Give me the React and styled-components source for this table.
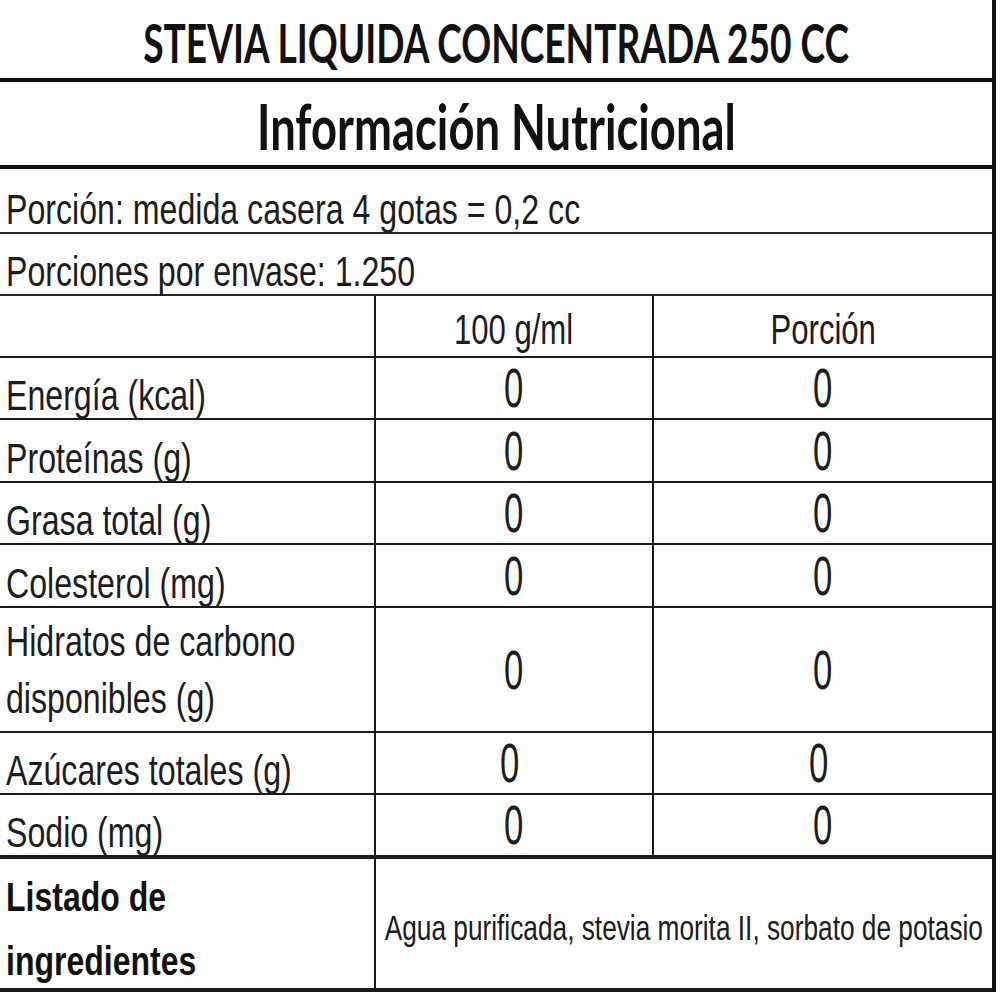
import React from "react";
import styled, { createGlobalStyle } from "styled-components";

const Global = createGlobalStyle`
  html, body { margin: 0; padding: 0; background: #ffffff; }
  body { font-family: "Liberation Sans", Arial, sans-serif; color: #1c1c1c; }
  * { box-sizing: border-box; }
`;

const Sheet = styled.div`
  width: 996px;
  display: flex;
  flex-direction: column;
  border-right: 4px solid #111;
  background: #fff;
`;

const BannerRow = styled.div`
  height: ${(p) => p.$h}px;
  border-bottom: 4px solid #111;
  display: flex;
  align-items: center;
  justify-content: center;
  padding-top: ${(p) => p.$pt || 0}px;
`;

const BannerText = styled.span`
  display: inline-block;
  font-family: Lato, "Open Sans", sans-serif;
  font-weight: 700;
  font-size: ${(p) => p.$size}px;
  line-height: 1;
  white-space: nowrap;
  color: #111;
  transform: scaleX(${(p) => p.$sx});
  transform-origin: center;
`;

const InfoRow = styled.div`
  height: ${(p) => p.$h}px;
  border-bottom: 2px solid #222;
  display: flex;
  align-items: flex-end;
  padding-left: 6px;
`;

const Label = styled.span`
  display: inline-block;
  font-size: 42px;
  line-height: ${(p) => p.$lh || 44}px;
  white-space: nowrap;
  color: #1c1c1c;
  transform: scaleX(0.765);
  transform-origin: left center;
`;

const Grid = styled.div`
  display: grid;
  grid-template-columns: 376px 278px 1fr;
`;

const Cell = styled.div`
  height: ${(p) => p.$h}px;
  border-bottom: ${(p) => (p.$thick ? 4 : 2)}px solid #1a1a1a;
  border-right: ${(p) => (p.$last ? "none" : "2px solid #1a1a1a")};
  grid-column: ${(p) => p.$span || "auto"};
  display: flex;
  align-items: ${(p) => p.$align || "flex-end"};
  justify-content: ${(p) => (p.$center ? "center" : "flex-start")};
  padding-left: ${(p) => (p.$center ? 0 : 6)}px;
  padding-right: ${(p) => p.$nudge || 0}px;
  padding-bottom: ${(p) => p.$pb || 0}px;
  padding-top: ${(p) => p.$pt || 0}px;
`;

const HeadText = styled.span`
  display: inline-block;
  font-size: 42px;
  line-height: 44px;
  white-space: nowrap;
  color: #1c1c1c;
  transform: scaleX(0.74);
  transform-origin: center;
`;

const Zero = styled.span`
  display: inline-block;
  font-size: 56px;
  line-height: 58px;
  color: #1c1c1c;
  transform: scaleX(0.62);
  transform-origin: center;
`;

const BoldLabel = styled.span`
  display: inline-block;
  font-size: 40px;
  font-weight: 700;
  line-height: 64px;
  white-space: nowrap;
  color: #111;
  transform: scaleX(0.8);
  transform-origin: left center;
`;

const Ingredients = styled.span`
  display: inline-block;
  font-size: 35px;
  line-height: 40px;
  white-space: nowrap;
  color: #1c1c1c;
  transform: scaleX(0.75);
  transform-origin: center;
`;

const nutrients = [
  { name: "Energía (kcal)", h: 62 },
  { name: "Proteínas (g)", h: 63 },
  { name: "Grasa total (g)", h: 62 },
  { name: "Colesterol (mg)", h: 63 },
  { name: ["Hidratos de carbono", "disponibles (g)"], h: 125 },
  { name: "Azúcares totales (g)", h: 62, nudge: 8 },
  { name: "Sodio (mg)", h: 64, thick: true },
];

export default function App() {
  return (
    <>
      <Global />
      <Sheet>
        <BannerRow $h={82} $pt={6}>
          <BannerText $size={53} $sx={0.7}>STEVIA LIQUIDA CONCENTRADA 250 CC</BannerText>
        </BannerRow>
        <BannerRow $h={87} $pt={4}>
          <BannerText $size={63} $sx={0.72}>Información Nutricional</BannerText>
        </BannerRow>
        <InfoRow $h={65}>
          <Label>Porción: medida casera 4 gotas = 0,2 cc</Label>
        </InfoRow>
        <InfoRow $h={62}>
          <Label>Porciones por envase: 1.250</Label>
        </InfoRow>
        <Grid>
          <Cell $h={62} />
          <Cell $h={62} $center $pb={4}>
            <HeadText>100 g/ml</HeadText>
          </Cell>
          <Cell $h={62} $center $last $pb={4}>
            <HeadText>Porción</HeadText>
          </Cell>
          {nutrients.map((n) => {
            const multi = Array.isArray(n.name);
            return (
              <React.Fragment key={multi ? n.name[0] : n.name}>
                <Cell $h={n.h} $thick={n.thick} $align={multi ? "center" : "flex-end"}>
                  {multi ? (
                    <Label $lh={57}>
                      {n.name[0]}
                      <br />
                      {n.name[1]}
                    </Label>
                  ) : (
                    <Label>{n.name}</Label>
                  )}
                </Cell>
                <Cell $h={n.h} $thick={n.thick} $center $align="center" $nudge={n.nudge}>
                  <Zero>0</Zero>
                </Cell>
                <Cell $h={n.h} $thick={n.thick} $center $align="center" $nudge={n.nudge} $last>
                  <Zero>0</Zero>
                </Cell>
              </React.Fragment>
            );
          })}
          <Cell $h={133} $thick $align="center" $pt={10}>
            <BoldLabel>
              Listado de
              <br />
              ingredientes
            </BoldLabel>
          </Cell>
          <Cell $h={133} $thick $center $align="center" $span="2 / span 2" $last $pt={8}>
            <Ingredients>Agua purificada, stevia morita II, sorbato de potasio</Ingredients>
          </Cell>
        </Grid>
      </Sheet>
    </>
  );
}
